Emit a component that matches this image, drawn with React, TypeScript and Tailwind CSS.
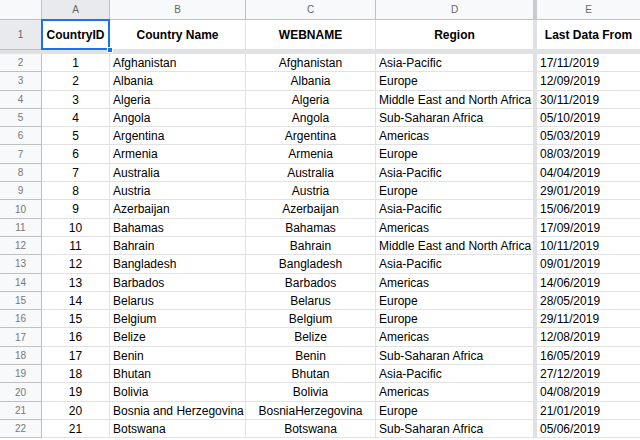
import React from "react";

type Row = [number, string, string, string, string];

const rows: Row[] = [
  [1, "Afghanistan", "Afghanistan", "Asia-Pacific", "17/11/2019"],
  [2, "Albania", "Albania", "Europe", "12/09/2019"],
  [3, "Algeria", "Algeria", "Middle East and North Africa", "30/11/2019"],
  [4, "Angola", "Angola", "Sub-Saharan Africa", "05/10/2019"],
  [5, "Argentina", "Argentina", "Americas", "05/03/2019"],
  [6, "Armenia", "Armenia", "Europe", "08/03/2019"],
  [7, "Australia", "Australia", "Asia-Pacific", "04/04/2019"],
  [8, "Austria", "Austria", "Europe", "29/01/2019"],
  [9, "Azerbaijan", "Azerbaijan", "Asia-Pacific", "15/06/2019"],
  [10, "Bahamas", "Bahamas", "Americas", "17/09/2019"],
  [11, "Bahrain", "Bahrain", "Middle East and North Africa", "10/11/2019"],
  [12, "Bangladesh", "Bangladesh", "Asia-Pacific", "09/01/2019"],
  [13, "Barbados", "Barbados", "Americas", "14/06/2019"],
  [14, "Belarus", "Belarus", "Europe", "28/05/2019"],
  [15, "Belgium", "Belgium", "Europe", "29/11/2019"],
  [16, "Belize", "Belize", "Americas", "12/08/2019"],
  [17, "Benin", "Benin", "Sub-Saharan Africa", "16/05/2019"],
  [18, "Bhutan", "Bhutan", "Asia-Pacific", "27/12/2019"],
  [19, "Bolivia", "Bolivia", "Americas", "04/08/2019"],
  [20, "Bosnia and Herzegovina", "BosniaHerzegovina", "Europe", "21/01/2019"],
  [21, "Botswana", "Botswana", "Sub-Saharan Africa", "05/06/2019"],
];

const cell = "shrink-0 border-r border-b border-[#e2e2e2] overflow-hidden whitespace-nowrap";

function Frozen({ dark }: { dark?: boolean }) {
  return <div className={`w-[4px] shrink-0 ${dark ? "bg-[#c9cbcf]" : "bg-[#dfe1e5]"}`} />;
}

export default function App() {
  return (
    <div className="w-[640px] h-[440px] overflow-hidden bg-white font-['Liberation_Sans',Arial,sans-serif] text-[12px] text-black">
      {/* column letters */}
      <div className="flex h-[20px] bg-[#f8f9fa] text-[10px] text-[#666]">
        <div className="w-[42px] shrink-0 border-r border-b border-[#c0c0c0]" />
        <div className="w-[68px] shrink-0 border-r border-b border-[#c0c0c0] bg-[#e8eaed] flex items-center justify-center">A</div>
        <div className="w-[136px] shrink-0 border-r border-b border-[#c0c0c0] flex items-center justify-center">B</div>
        <div className="w-[130px] shrink-0 border-r border-b border-[#c0c0c0] flex items-center justify-center">C</div>
        <div className="w-[157px] shrink-0 border-b border-[#c0c0c0] flex items-center justify-center">D</div>
        <Frozen dark />
        <div className="flex-1 border-b border-[#c0c0c0] flex items-center justify-center">E</div>
      </div>

      {/* header row */}
      <div className="flex h-[30px] font-bold">
        <div className="w-[42px] shrink-0 border-r border-b border-[#c0c0c0] bg-[#e8eaed] text-[10px] font-normal text-[#666] flex items-center justify-center">1</div>
        <div className={`${cell} w-[68px] relative flex items-center justify-center overflow-visible`}>
          CountryID
          <div className="absolute -left-px -top-px w-[69px] h-[31px] border-2 border-[#1a73e8]" />
          <div className="absolute -right-[4px] -bottom-[4px] w-[6px] h-[6px] bg-[#1a73e8] border border-white" />
        </div>
        <div className={`${cell} w-[136px] flex items-center justify-center`}>Country Name</div>
        <div className={`${cell} w-[130px] flex items-center justify-center`}>WEBNAME</div>
        <div className={`${cell} w-[157px] border-r-0 flex items-center justify-center`}>Region</div>
        <Frozen />
        <div className="flex-1 border-b border-[#e2e2e2] flex items-center justify-center whitespace-nowrap">Last Data From</div>
      </div>

      {/* frozen row bar */}
      <div className="h-[4px] bg-[#dfe1e5]" />

      {rows.map((r, i) => (
        <div key={r[0]} className="flex h-[18.3px] leading-[19px]">
          <div className="w-[42px] shrink-0 border-r border-b border-[#c0c0c0] bg-[#f8f9fa] text-[10px] text-[#777] flex items-center justify-center">
            {i + 2}
          </div>
          <div className={`${cell} w-[68px] text-center`}>{r[0]}</div>
          <div className={`${cell} w-[136px] pl-[3px]`}>{r[1]}</div>
          <div className={`${cell} w-[130px] text-center`}>{r[2]}</div>
          <div className={`${cell} w-[157px] border-r-0 pl-[3px]`}>{r[3]}</div>
          <Frozen />
          <div className="flex-1 border-b border-[#e2e2e2] pl-[3px] whitespace-nowrap">{r[4]}</div>
        </div>
      ))}
    </div>
  );
}
